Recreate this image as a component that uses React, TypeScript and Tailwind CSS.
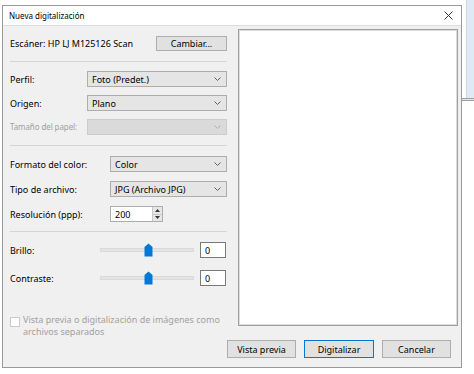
import React from "react";

const font = { fontFamily: '"Noto Sans", "Segoe UI", sans-serif' };

function Chevron({ light }: { light?: boolean }) {
  return (
    <svg width="7" height="4" viewBox="0 0 7 4" className="shrink-0">
      <path d="M0.5 0.5 L3.5 3.5 L6.5 0.5" fill="none" stroke={light ? "#b0b0b0" : "#606060"} strokeWidth="1" />
    </svg>
  );
}

function Select({ value, disabled }: { value?: string; disabled?: boolean }) {
  return (
    <div
      className={
        "flex-1 h-[16px] flex items-center justify-between pl-[4px] pr-[5px] border " +
        (disabled ? "bg-[#dadada] border-[#cccccc]" : "bg-[#e5e5e5] border-[#adadad]")
      }
    >
      <span className="text-black">{value}</span>
      <Chevron light={disabled} />
    </div>
  );
}

function Row({ label, children, labelW, disabled }: { label: string; children: React.ReactNode; labelW: string; disabled?: boolean }) {
  return (
    <div className="flex items-center">
      <div
        className={
          labelW +
          " whitespace-nowrap shrink-0" +
          (disabled ? " text-[#a0a0a0] text-[8px] tracking-[-0.1px]" : " text-black")
        }
      >
        {label}
      </div>
      {children}
    </div>
  );
}

function Slider() {
  return (
    <div className="relative w-[94px] h-[16px] flex items-center ml-[13px] mr-[6px]">
      <div className="w-full h-[4px] bg-[#e4e4e4] border border-[#dadada]" />
      {/* THUMB */}
      <svg width="9" height="14" viewBox="0 0 9 14" className="absolute left-[44px] top-[1px]">
        <path d="M0.5 4 L4.5 0.5 L8.5 4 L8.5 13.5 L0.5 13.5 Z" fill="#0078d7" />
      </svg>
    </div>
  );
}

function Sep() {
  return <div className="h-px bg-[#d5d5d5]" />;
}

function Btn({ children, primary, className }: { children: React.ReactNode; primary?: boolean; className?: string }) {
  return (
    <div
      className={
        "flex items-center justify-center bg-[#e1e1e1] border text-black " +
        (primary ? "border-[#0078d7] " : "border-[#adadad] ") +
        (className ?? "")
      }
    >
      {children}
    </div>
  );
}

export default function App() {
  return (
    <div className="w-[474px] h-[374px] bg-white flex overflow-hidden text-[9px] leading-none" style={font}>
      {/* DIALOG */}
      <div className="ml-[2px] mt-[5px] w-[460px] h-[363px] border border-[#9a9a9a] flex flex-col bg-[#f0f0f0]">
        {/* TITLE */}
        <div className="h-[20px] bg-white flex items-center justify-between pl-[6px] pr-[8px] border-b border-[#dcdcdc]">
          <span className="text-black text-[8px]">Nueva digitalización</span>
          <svg width="9" height="9" viewBox="0 0 9 9">
            <path d="M0.5 0.5 L8.5 8.5 M8.5 0.5 L0.5 8.5" stroke="#333" strokeWidth="1" />
          </svg>
        </div>

        <div className="flex h-[309px]">
          {/* LEFT */}
          <div className="w-[233px] pl-[7px] pr-[9px] flex flex-col">
            <div className="mt-[10px] flex items-center justify-between">
              <span className="text-black">Escáner: HP LJ M125126 Scan</span>
              <Btn className="w-[71px] h-[15px]">Cambiar...</Btn>
            </div>
            <div className="mt-[10px]">
              <Sep />
            </div>
            <div className="mt-[9px] flex flex-col gap-[8px]">
              <Row label="Perfil:" labelW="w-[77px]">
                <Select value="Foto (Predet.)" />
              </Row>
              <Row label="Origen:" labelW="w-[77px]">
                <Select value="Plano" />
              </Row>
              <Row label="Tamaño del papel:" labelW="w-[77px]" disabled>
                <Select disabled />
              </Row>
            </div>
            <div className="mt-[10px]">
              <Sep />
            </div>
            <div className="mt-[10px] flex flex-col gap-[9px]">
              <Row label="Formato del color:" labelW="w-[100px]">
                <Select value="Color" />
              </Row>
              <Row label="Tipo de archivo:" labelW="w-[100px]">
                <Select value="JPG (Archivo JPG)" />
              </Row>
              <Row label="Resolución (ppp):" labelW="w-[100px]">
                <div className="w-[53px] h-[16px] flex border border-[#adadad] bg-white">
                  <div className="flex-1 flex items-center pl-[4px] text-black">200</div>
                  <div className="w-[10px] flex flex-col bg-[#e6e6e6] border-l border-[#c8c8c8]">
                    <div className="flex-1 flex items-center justify-center border-b border-[#c8c8c8]">
                      <svg width="5" height="3" viewBox="0 0 5 3">
                        <path d="M0 3 L2.5 0 L5 3 Z" fill="#333" />
                      </svg>
                    </div>
                    <div className="flex-1 flex items-center justify-center">
                      <svg width="5" height="3" viewBox="0 0 5 3">
                        <path d="M0 0 L2.5 3 L5 0 Z" fill="#333" />
                      </svg>
                    </div>
                  </div>
                </div>
              </Row>
            </div>
            <div className="mt-[9px]">
              <Sep />
            </div>
            <div className="mt-[10px] flex flex-col gap-[12px]">
              <Row label="Brillo:" labelW="w-[77px]">
                <Slider />
                <div className="w-[26px] h-[16px] bg-white border border-[#7a7a7a] flex items-center pl-[4px] text-black">0</div>
              </Row>
              <Row label="Contraste:" labelW="w-[77px]">
                <Slider />
                <div className="w-[26px] h-[16px] bg-white border border-[#7a7a7a] flex items-center pl-[4px] text-black">0</div>
              </Row>
            </div>
            {/* CHECKBOX */}
            <div className="mt-[30px] flex items-start gap-[3px] text-[#a0a0a0]">
              <div className="mt-[1px] w-[10px] h-[10px] bg-white border border-[#cccccc] shrink-0" />
              <div className="leading-[12px] -mt-[2px]">
                Vista previa o digitalización de imágenes como
                <br />
                archivos separados
              </div>
            </div>
          </div>

          {/* PREVIEW */}
          <div className="flex-1 pl-[2px] pr-[3px] pt-[3px]">
            <div className="h-[297px] bg-white border border-[#a0a0a0] shadow-[inset_1px_1px_0_#dcdcdc,inset_-1px_-1px_0_#dcdcdc]" />
          </div>
        </div>

        {/* BUTTONS */}
        <div className="mt-[5px] flex justify-end gap-[8px] pr-[10px]">
          <Btn className="w-[69px] h-[18px]">Vista previa</Btn>
          <Btn primary className="w-[70px] h-[18px]">Digitalizar</Btn>
          <Btn className="w-[69px] h-[18px]">Cancelar</Btn>
        </div>
      </div>

      {/* BACKGROUND WINDOW EDGE */}
      <div className="flex-1 flex flex-col">
        <div className="h-[98px] ml-[4px] bg-[#dfeaf6] border-l border-[#c9d8e8]" />
        <div className="h-[3px] border-y border-[#a0a0a0] bg-[#e6e6e6]" />
      </div>
    </div>
  );
}
